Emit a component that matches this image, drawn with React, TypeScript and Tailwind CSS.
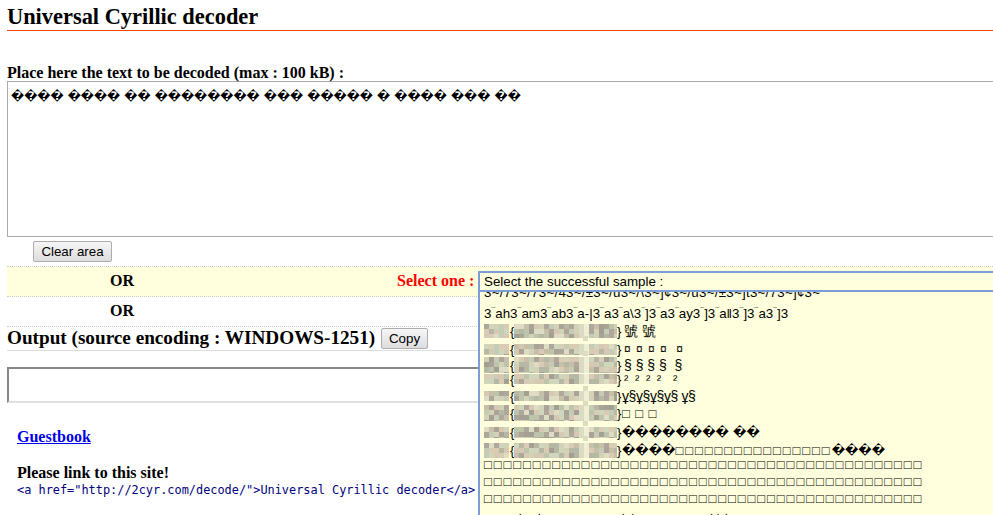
import React from "react";

const palette = ["#d6c8b2", "#b4b8a4", "#d3d1b6", "#dedcc2", "#bcc4ac", "#aaa398", "#d9cbb4", "#c4ccb6", "#a39f92", "#b0a79c", "#cfd6bc", "#c7bfa8"];

function Mosaic({ w, h, seed, light }: { w: number; h: number; seed: number; light?: boolean }) {
  const cells: React.ReactNode[] = [];
  const s = 5;
  let v = seed;
  for (let y = 0; y < h; y += s) {
    for (let x = 0; x < w; x += s) {
      v = (v * 31 + 17) % 101;
      let fill = palette[v % palette.length];
      if (light && x === 65) fill = "#d9dcc2";
      if (light && x === 70) fill = "#efeed2";
      cells.push(<rect key={`${x}-${y}`} x={x} y={y} width={s} height={s} fill={fill} />);
    }
  }
  return (
    <svg width={w} height={h} className="block shrink-0">
      {cells}
    </svg>
  );
}

const rows = [
  { rowH: 18, h: 14, text: "號 號", cls: "ml-[2px] text-[14px]", seed: 3 },
  { rowH: 18, h: 11, text: "¤ ¤ ¤ ¤  ¤", cls: "ml-[2px] text-[12px] tracking-[1px]", seed: 9 },
  { rowH: 14, h: 16, text: "§ § § §  §", cls: "ml-[2px] text-[14px]", seed: 21 },
  { rowH: 14, h: 10, text: "² ² ² ²  ²", cls: "ml-[2px] text-[13px] tracking-[1.5px]", seed: 33 },
  { rowH: 20, h: 10, text: "ұ§ұ§ұ§ұ§ ұ§", cls: "text-[14px] tracking-[-0.4px]", seed: 47 },
  { rowH: 14, h: 16, text: "□ □ □", cls: "text-[13px] tracking-[0.9px]", seed: 51 },
  { rowH: 24, h: 11, text: "�������� ��", cls: "font-['DejaVu_Sans',sans-serif] text-[12px] font-bold", seed: 63 },
  { rowH: 12, h: 15, text: "", cls: "", seed: 77 },
];

const diamonds = "font-['DejaVu_Sans',sans-serif] text-[12px] font-bold";
const boxText = "whitespace-pre text-[13px] leading-[17px] tracking-[1.91px]";
const boxes = "□".repeat(45);

function Row({ rowH, h, text, cls, seed }: { rowH: number; h: number; text: string; cls: string; seed: number }) {
  return (
    <div className="flex items-center whitespace-pre text-[14px] leading-none text-black" style={{ height: rowH }}>
      <Mosaic w={25} h={h} seed={seed} />
      <span className="ml-[1px] w-[4px] text-[13px]">{"{"}</span>
      <Mosaic w={103} h={h} seed={seed + 5} light />
      <span className="w-[5px] text-[13px]">{"}"}</span>
      {text ? (
        <span className={cls}>{text}</span>
      ) : (
        <>
          <span className={diamonds}>����</span>
          <span className="text-[13px] tracking-[1.91px]">{"□".repeat(16)}</span>
          <span className={diamonds}>����</span>
        </>
      )}
    </div>
  );
}

function Macron() {
  return <span className="align-[5.5px] text-[7px] leading-[0]">¯</span>;
}

const second = "3¯ah3¯am3¯ab3¯a-|3¯a3¯a\\3¯]3¯a3¯ay3¯]3¯a‖3¯]3¯a3¯]3".split("¯");

const btn =
  "block rounded-[2px] border border-[#adadad] bg-gradient-to-b from-[#f6f6f6] to-[#dddddd] font-['Liberation_Sans',sans-serif] text-[13.33px] leading-none text-black";

export default function App() {
  return (
    <div className="relative h-[515px] w-[993px] overflow-hidden bg-white font-['Liberation_Serif',serif] text-black">
      <div className="pl-[7px]">
        <h1 className="h-[31px] border-b border-[#ff4500] pt-[5px] text-[22.4px] font-bold leading-[24px]">Universal Cyrillic decoder</h1>
        <div className="h-[50px] pt-[33px] text-[16px] font-bold leading-[18px]">Place here the text to be decoded (max : 100 kB) :</div>
        <div className="h-[156px] w-[1000px] border border-[#a9a9a9] pl-[3px] pt-[5px] font-['DejaVu_Sans',sans-serif] text-[11.8px] font-bold leading-[18px]">
          <span className="whitespace-pre">���� ���� �� �������� ��� ����� � ���� ��� ��</span>
        </div>
        <div className="pl-[26px] pt-[4px]">
          <button className={`${btn} h-[21px] w-[79px]`}>Clear area</button>
        </div>
        <div className="mt-[4px] flex h-[31px] border-y border-dotted border-[#cccccc] bg-[#ffffdd] pb-[2px]">
          <div className="w-[103px]" />
          <div className="flex items-center text-[16px] font-bold">OR</div>
          <div className="ml-[263px] flex items-center text-[16px] font-bold text-[#ff0000]">Select one :</div>
        </div>
        <div className="flex h-[30px] items-center border-b border-dotted border-[#cccccc] pb-[2px] pl-[103px] text-[16px] font-bold">OR</div>
        <div className="flex h-[23px] items-center">
          <span className="w-[369px] whitespace-nowrap pb-[2px] text-[19.2px] font-bold leading-none">Output (source encoding : WINDOWS-1251)</span>
          <button className={`${btn} ml-[5px] h-[21px] w-[47px]`}>Copy</button>
        </div>
        <div className="h-px bg-[#dddddd]" />
        <div className="mt-[16px] h-[36px] w-[1000px] border-2 border-b-[#e0e0e0] border-l-[#888888] border-r-[#e0e0e0] border-t-[#888888]" />
        <div className="pl-[10px] pt-[25px]">
          <a href="#" className="block text-[16px] font-bold leading-[18px] text-[#0000ee] underline">Guestbook</a>
          <div className="pt-[18px] text-[16px] font-bold leading-[18px]">Please link to this site!</div>
          <div className="mt-[1px] whitespace-pre font-['DejaVu_Sans_Mono',monospace] text-[11.9px] leading-[14px] text-[#000080]">{'<a href="http://2cyr.com/decode/">Universal Cyrillic decoder</a>'}</div>
        </div>
      </div>

      {/* open dropdown */}
      <div className="absolute left-[478px] top-[271px] h-[244px] w-[520px] border-l-2 border-[#7b9ed9] bg-[#ffffdd] font-['Liberation_Sans',sans-serif] text-black">
        <div className="relative z-10 h-[21px] border-y-2 border-[#7b9ed9] bg-[#ffffdd] pl-[4px] text-[13.33px] leading-[17px]">Select the successful sample :</div>
        <div className="h-[223px] overflow-hidden pl-[4px] text-[13.33px]">
          <div className="-mt-[9px] h-[21px] whitespace-pre leading-[20px] tracking-[0.26px]">3~/73~/73~/43~/±3~/u3~/\3~]¢3~/u3~/±3~]t3~/73~]¢3~</div>
          <div className="h-[18px] whitespace-pre leading-[20px]">
            {second.map((part, i) => (
              <React.Fragment key={i}>
                {i > 0 && <Macron />}
                {part}
              </React.Fragment>
            ))}
          </div>
          {rows.map((r) => (
            <Row key={r.seed} rowH={r.rowH} h={r.h} text={r.text} cls={r.cls} seed={r.seed} />
          ))}
          <div className={boxText}>{boxes}</div>
          <div className={boxText}>{boxes}</div>
          <div className={boxText}>{boxes}</div>
          <div className="whitespace-pre pt-[3px] text-[13px] leading-[17px] tracking-[1.9px]">□□□ b d□ □□□□ □□b|□ □□□□ □d/d□</div>
        </div>
        {/* pale cells of the mosaic between the rows */}
        <svg className="pointer-events-none absolute left-[103px] top-[52px]" width="8" height="136">
          {[13, 28, 63, 78, 98, 113].map((y) => (
            <rect key={y} x="0" y={y} width="5" height="5" fill="#dcdcc0" />
          ))}
        </svg>
      </div>
    </div>
  );
}
